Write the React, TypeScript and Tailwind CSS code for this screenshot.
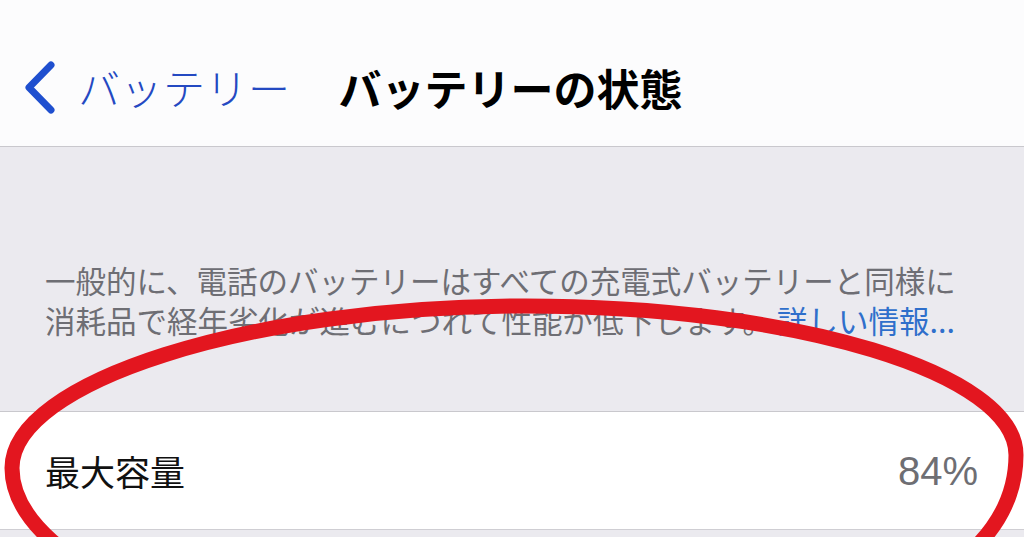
import React from "react";

const JP = { fontFamily: '"Noto Sans CJK JP", "Noto Sans", sans-serif' };

export default function App() {
  return (
    <div
      className="relative w-full h-[537px] overflow-hidden bg-[#ebeaef]"
      style={JP}
    >
      {/* Header */}
      <div className="h-[147px] bg-[#fcfcfd] border-b border-[#c9c8cd] flex items-center pt-[28px]">
        <div className="flex items-center pl-[22px]">
          <svg width="36" height="54" viewBox="0 0 36 54" className="mr-[20px]">
            <path
              d="M29 5 L7 27.5 L29 50"
              fill="none"
              stroke="#1f4fcf"
              strokeWidth="7"
              strokeLinecap="round"
              strokeLinejoin="round"
            />
          </svg>
          <span className="text-[42px] leading-none text-[#2449c2] font-light tracking-[0.5px]">
            バッテリー
          </span>
        </div>
        <span className="ml-[48px] text-[43px] leading-none font-bold text-black">
          バッテリーの状態
        </span>
      </div>

      {/* Description */}
      <div className="h-[265px] border-b border-[#c9c8cd] pl-[45px] pt-[113px]">
        <p className="text-[30.5px] leading-[40px] text-[#6e6e74] whitespace-nowrap">
          一般的に、電話のバッテリーはすべての充電式バッテリーと同様に
          <br />
          消耗品で経年劣化が進むにつれて性能が低下します。
          <span className="text-[#2f6fcb] ml-[4px]">詳しい情報...</span>
        </p>
      </div>

      {/* Row */}
      <div className="h-[118px] bg-white border-b border-[#cfced3] flex items-center justify-between pl-[45px] pr-[46px]">
        <span className="text-[35px] leading-none text-[#111]">最大容量</span>
        <span
          className="text-[40px] leading-none text-[#6e6e73]"
          style={{ fontFamily: '"Liberation Sans", Arial, sans-serif' }}
        >
          84%
        </span>
      </div>

      {/* Red hand-drawn ellipse annotation */}
      <svg
        className="absolute inset-0 pointer-events-none"
        width="1024"
        height="537"
        viewBox="0 0 1024 537"
      >
        <path
          d="M12 468 C12 382 248 306 525 306 C796 306 1016 373 1016 455 C1016 585 820 660 520 660 C240 660 12 570 12 468 Z"
          fill="none"
          stroke="#e3161f"
          strokeWidth="15"
        />
      </svg>
    </div>
  );
}
